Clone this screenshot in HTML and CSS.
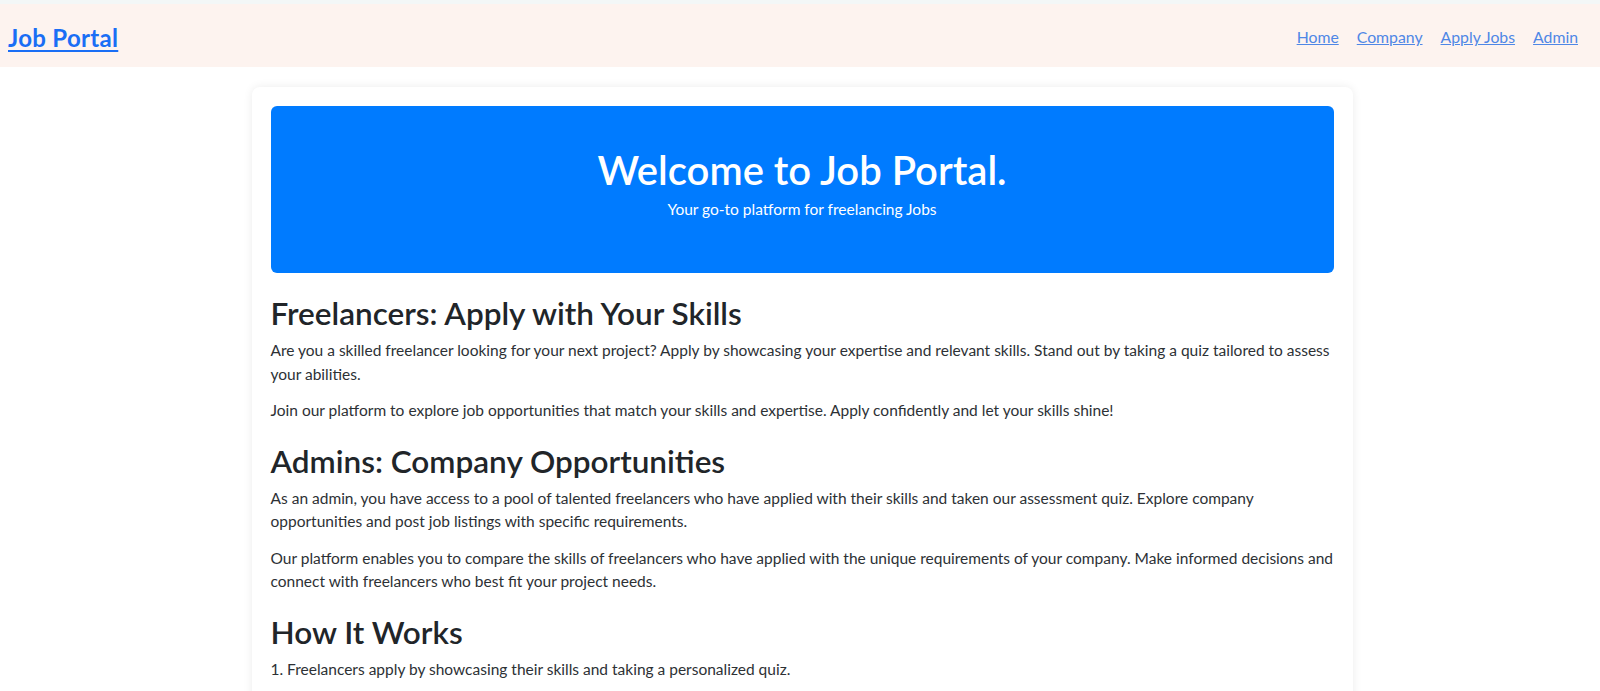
FILE: index.html
```html
<!DOCTYPE html>
<html lang="en">
<head>
<meta charset="utf-8">
<title>Job Portal</title>
<link rel="stylesheet" href="styles.css">
</head>
<body>
<div class="topline"></div>
<nav class="navbar">
  <a class="brand" href="#">Job Portal</a>
  <ul class="nav-links">
    <li><a href="#">Home</a></li>
    <li><a href="#">Company</a></li>
    <li><a href="#">Apply Jobs</a></li>
    <li><a href="#">Admin</a></li>
  </ul>
</nav>
<main class="container">
  <div class="card">
    <section class="hero">
      <h1>Welcome to Job Portal.</h1>
      <p>Your go-to platform for freelancing Jobs</p>
    </section>
    <section class="block">
      <h2>Freelancers: Apply with Your Skills</h2>
      <p>Are you a skilled freelancer looking for your next project? Apply by showcasing your expertise and relevant skills. Stand out by taking a quiz tailored to assess your abilities.</p>
      <p>Join our platform to explore job opportunities that match your skills and expertise. Apply confidently and let your skills shine!</p>
    </section>
    <section class="block">
      <h2>Admins: Company Opportunities</h2>
      <p>As an admin, you have access to a pool of talented freelancers who have applied with their skills and taken our assessment quiz. Explore company opportunities and post job listings with specific requirements.</p>
      <p>Our platform enables you to compare the skills of freelancers who have applied with the unique requirements of your company. Make informed decisions and connect with freelancers who best fit your project needs.</p>
    </section>
    <section class="block">
      <h2>How It Works</h2>
      <p>1. Freelancers apply by showcasing their skills and taking a personalized quiz.</p>
      <p>2. Admins explore company opportunities and post job listings.</p>
      <p>3. Our platform matches freelancers with the right opportunities.</p>
    </section>
  </div>
</main>
</body>
</html>
```
FILE: styles.css
```css
* { box-sizing: border-box; }
html, body { margin: 0; padding: 0; }
body {
  font-family: "Lato", "Liberation Sans", sans-serif;
  font-size: 15.5px;
  line-height: 23.5px;
  color: #212529;
  background: #ffffff;
}
.topline { height: 4px; background: #f3f7f7; }
.navbar {
  height: 63px;
  background: #fdf3ef;
  display: flex;
  align-items: center;
  justify-content: space-between;
  padding: 4px 22px 0 8px;
}
.brand {
  font-size: 24px;
  font-weight: 700;
  letter-spacing: 0.3px;
  color: #1a6ef5;
  text-decoration: underline;
  text-underline-offset: 3px;
}
.nav-links {
  list-style: none;
  margin: 0;
  padding: 0;
  display: flex;
  gap: 18px;
}
.nav-links a {
  font-size: 15.8px;
  color: #4f87e6;
  text-decoration: underline;
}
.container {
  max-width: 1101px;
  margin: 20px auto 0;
  position: relative;
  left: 2px;
}
.card {
  background: #fff;
  border-radius: 8px;
  box-shadow: 0 0 10px rgba(0,0,0,0.08);
  padding: 19px;
}
.hero {
  background: #007bff;
  color: #fff;
  border-radius: 6px;
  text-align: center;
  padding: 40px 20px 38px;
  margin-bottom: 21px;
}
.hero h1 {
  margin: 0 0 4px;
  font-size: 40px;
  line-height: 48px;
  font-weight: 600;
}
.hero p {
  margin: 0 0 15px;
  font-size: 15.5px;
  line-height: 22px;
}
.block h2 {
  margin: 19px 0 7px;
  font-size: 31.5px;
  line-height: 38px;
  font-weight: 600;
  color: #212529;
}
.block:first-of-type h2 { margin-top: 0; }
.block p {
  margin: 0 0 13px;
  color: #2d3135;
}
```
